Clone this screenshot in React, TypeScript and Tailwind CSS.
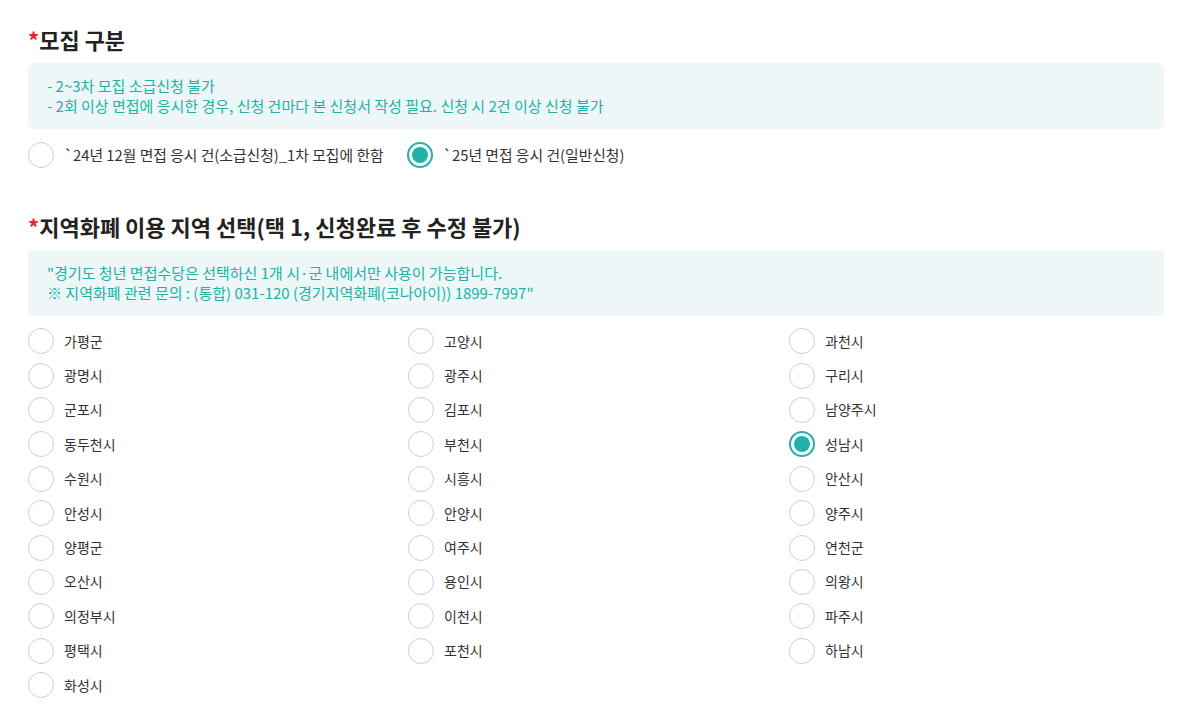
import React, { useState } from "react";

const regions = [
    "가평군", "고양시", "과천시",
    "광명시", "광주시", "구리시",
    "군포시", "김포시", "남양주시",
    "동두천시", "부천시", "성남시",
    "수원시", "시흥시", "안산시",
    "안성시", "안양시", "양주시",
    "양평군", "여주시", "연천군",
    "오산시", "용인시", "의왕시",
    "의정부시", "이천시", "파주시",
    "평택시", "포천시", "하남시",
    "화성시",
];

const Radio = ({ checked, label, onClick, wide }: { checked: boolean; label: string; onClick: () => void; wide?: boolean }) => {
    return (
        <label className="flex items-center gap-[10px] cursor-pointer" onClick={onClick}>
            {checked ? (
                <span className="w-[26px] h-[26px] rounded-full border-2 border-[#20b2aa] flex items-center justify-center bg-white shrink-0">
                    <span className="w-[16px] h-[16px] rounded-full bg-[#20b2aa]" />
                </span>
            ) : (
                <span className="w-[26px] h-[26px] rounded-full border border-[#cfcfcf] bg-white shrink-0" />
            )}
            <span className={wide ? "text-[14.8px] text-[#333]" : "text-[14px] text-[#333]"}>{label}</span>
        </label>
    );
};

const Heading = ({ children }: { children: React.ReactNode }) => (
    <h2 className="text-[22px] leading-[30px] font-bold text-[#222] mb-[9px]">
        <span className="text-[#e8262b]">*</span>
        {children}
    </h2>
);

const InfoBox = ({ lines }: { lines: string[] }) => (
    <div className="bg-[#eef7f8] rounded-[6px] px-[19px] py-[13px] text-[15px] leading-[20px] text-[#22b1a7]">
        {lines.map((l) => (
            <p key={l}>{l}</p>
        ))}
    </div>
);

export default function App() {
    const [type, setType] = useState(1);
    const [region, setRegion] = useState("성남시");

    return (
        <div
            className="bg-white pl-[28px] pr-[34px] pt-[24px] pb-[20px] min-h-[714px]"
            style={{ fontFamily: '"Noto Sans CJK KR", "Noto Sans", sans-serif' }}
        >
            <Heading>모집 구분</Heading>
            <InfoBox
                lines={[
                    "- 2~3차 모집 소급신청 불가",
                    "- 2회 이상 면접에 응시한 경우, 신청 건마다 본 신청서 작성 필요. 신청 시 2건 이상 신청 불가",
                ]}
            />
            <div className="flex mt-[13px]">
                <div className="w-[379px]">
                    <Radio wide checked={type === 0} label="`24년 12월 면접 응시 건(소급신청)_1차 모집에 한함" onClick={() => setType(0)} />
                </div>
                <Radio wide checked={type === 1} label="`25년 면접 응시 건(일반신청)" onClick={() => setType(1)} />
            </div>

            <div className="mt-[43px]">
                <Heading>지역화폐 이용 지역 선택(택 1, 신청완료 후 수정 불가)</Heading>
                <InfoBox
                    lines={[
                        "\"경기도 청년 면접수당은 선택하신 1개 시·군 내에서만 사용이 가능합니다.",
                        "※ 지역화폐 관련 문의 : (통합) 031-120 (경기지역화폐(코나아이)) 1899-7997\"",
                    ]}
                />
                <div className="grid grid-cols-[380px_381px_1fr] mt-[8px]">
                    {regions.map((r) => (
                        <div key={r} className="h-[34.4px] flex items-center">
                            <Radio checked={region === r} label={r} onClick={() => setRegion(r)} />
                        </div>
                    ))}
                </div>
            </div>
        </div>
    );
}
